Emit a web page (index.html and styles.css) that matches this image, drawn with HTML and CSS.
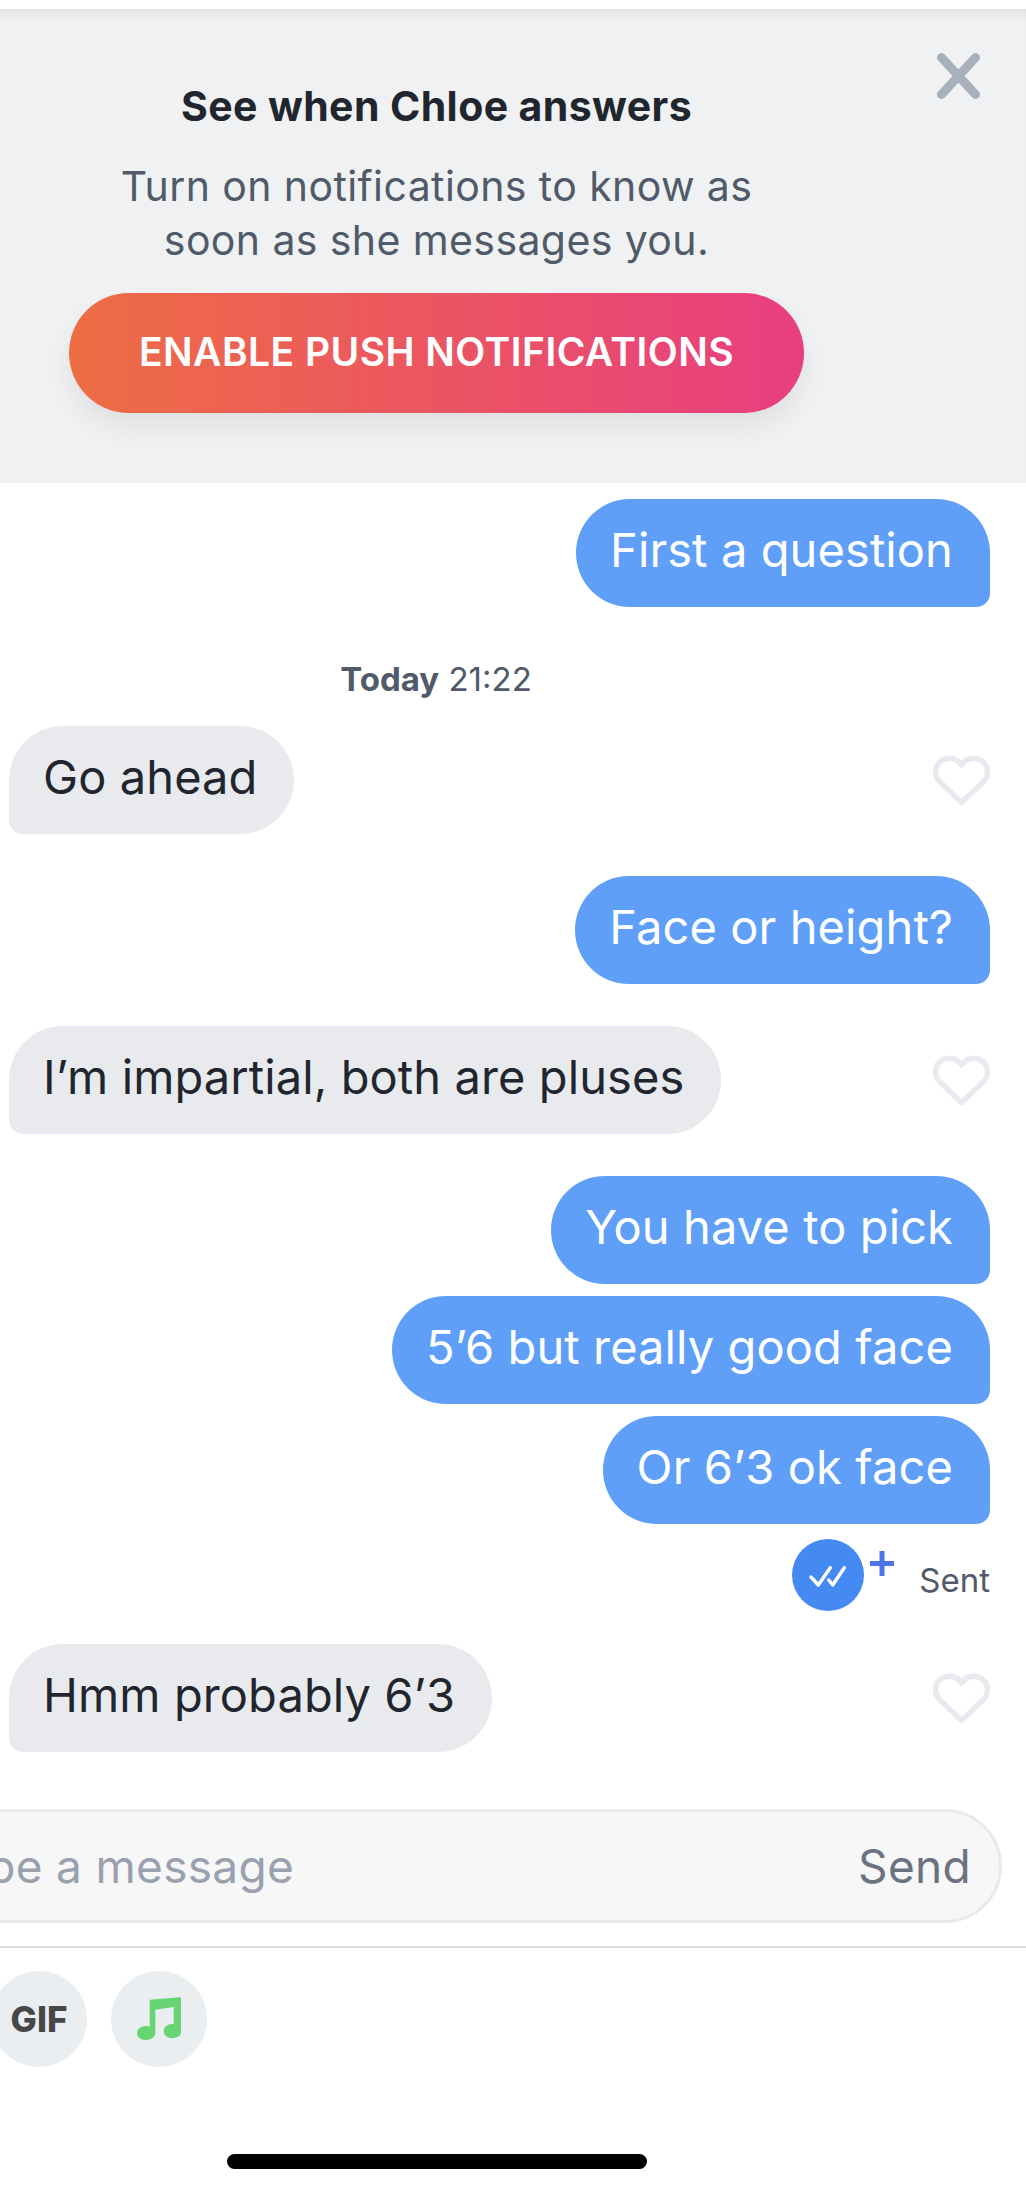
FILE: index.html
```html
<!DOCTYPE html>
<html lang="en">
<head>
    <meta charset="UTF-8">
    <meta name="viewport" content="width=device-width, initial-scale=1.0">
    <title>Chat with Chloe</title>
    <link rel="stylesheet" href="styles.css">
</head>
<body>
    <div class="banner">
        <button class="banner-close" aria-label="Close">
            <svg width="43" height="46" viewBox="0 0 43 46"><path d="M4.5 4.5 L38.5 41.5 M38.5 4.5 L4.5 41.5"/></svg>
        </button>
        <div class="banner-inner">
            <h2 class="banner-title">See when Chloe answers</h2>
            <p class="banner-text">Turn on notifications to know as<br>soon as she messages you.</p>
            <button class="enable-button">ENABLE PUSH NOTIFICATIONS</button>
        </div>
    </div>

    <div class="messages">
        <div class="row row-out first-row"><div class="bubble out">First a question</div></div>
        <div class="timestamp"><b>Today</b> 21:22</div>

        <div class="row row-in">
            <div class="bubble in">Go ahead</div>
            <svg class="heart" width="57" height="51" viewBox="0 0 57 51"><path d="M28.5 47.5 L7.5 27.5 C0 20.5 1.5 9.5 9.5 5 C17 1 24.5 4 28.5 10 C32.5 4 40 1 47.5 5 C55.5 9.5 57 20.5 49.5 27.5 Z"/></svg>
        </div>
        <div class="row row-out gap-big"><div class="bubble out">Face or height?</div></div>
        <div class="row row-in gap-big">
            <div class="bubble in">I’m impartial, both are pluses</div>
            <svg class="heart" width="57" height="51" viewBox="0 0 57 51"><path d="M28.5 47.5 L7.5 27.5 C0 20.5 1.5 9.5 9.5 5 C17 1 24.5 4 28.5 10 C32.5 4 40 1 47.5 5 C55.5 9.5 57 20.5 49.5 27.5 Z"/></svg>
        </div>
        <div class="row row-out gap-big"><div class="bubble out">You have to pick</div></div>
        <div class="row row-out gap-small"><div class="bubble out">5’6 but really good face</div></div>
        <div class="row row-out gap-small"><div class="bubble out">Or 6’3 ok face</div></div>

        <div class="receipt">
            <svg class="receipt-check" width="72" height="72" viewBox="0 0 72 72">
                <circle cx="36" cy="36" r="36"/>
                <path d="M19 38 L26.3 46 L38.3 28.7 M36.7 41 L40.7 46 L52.3 28.7"/>
            </svg>
            <svg class="receipt-plus" width="24" height="25" viewBox="0 0 24 25"><path d="M12 0 V25 M0 12.5 H24"/></svg>
            <span class="receipt-label">Sent</span>
        </div>

        <div class="row row-in gap-receipt">
            <div class="bubble in">Hmm probably 6’3</div>
            <svg class="heart" width="57" height="51" viewBox="0 0 57 51"><path d="M28.5 47.5 L7.5 27.5 C0 20.5 1.5 9.5 9.5 5 C17 1 24.5 4 28.5 10 C32.5 4 40 1 47.5 5 C55.5 9.5 57 20.5 49.5 27.5 Z"/></svg>
        </div>
    </div>

    <div class="composer">
        <div class="composer-input">
            <span class="placeholder">Type a message</span>
            <span class="send">Send</span>
        </div>
    </div>

    <div class="attachments">
        <div class="circle-button gif">GIF</div>
        <div class="circle-button">
            <svg width="44" height="44" viewBox="0 0 44 44"><path d="M12.7 2.7 L43 .2 Q44 .2 44 1.5 V35 C44 39 40 41 35 41 C30 41 26.7 38 26.7 34 C26.7 30 30.5 27 35 27 C35.5 27 36.7 27 36.7 27.5 V10 L18.3 12.7 V36 C18.3 40 14 43 8.5 43 C3.5 43 0 40 0 36 C0 32 4 29 8.5 29 C10 29 12.7 29.5 12.7 30 Z"/></svg>
        </div>
    </div>

    <div class="home-bar"></div>
</body>
</html>
```

FILE: styles.css
```css
:root {
    --text: #21262e;
    --muted: #515a68;
    --blue: #5f9ff8;
    --grey: #e9eaee;
}

html, body {
    margin: 0;
    padding: 0;
}

body {
    width: 1026px;
    height: 2193px;
    overflow: hidden;
    background: white;
    font-family: 'Inter', 'Liberation Sans', sans-serif;
    color: var(--text);
    padding-top: 9px;
    box-sizing: border-box;
}

button {
    font-family: inherit;
    border: none;
    padding: 0;
    background: none;
}

.banner {
    position: relative;
    height: 474px;
    background: #eff1f3;
    box-shadow: inset 0 12px 12px -8px rgba(0,0,0,0.08);
    box-sizing: border-box;
    padding: 72px 0 0 69px;
}

.banner-close {
    position: absolute;
    top: 44px;
    left: 937px;
    line-height: 0;
}

.banner-close path {
    fill: none;
    stroke: #a9b0bd;
    stroke-width: 9;
    stroke-linecap: round;
}

.banner-inner {
    width: 735px;
    text-align: center;
}

.banner-title {
    margin: 0;
    font-size: 41px;
    line-height: 50px;
    font-weight: 700;
    letter-spacing: 0.4px;
}

.banner-text {
    margin: 28px 0 0;
    font-size: 41px;
    line-height: 54px;
    letter-spacing: 0.4px;
    color: var(--muted);
}

.enable-button {
    display: block;
    width: 735px;
    height: 120px;
    margin-top: 26px;
    padding-bottom: 4px;
    border-radius: 60px;
    background: linear-gradient(90deg, #ee6d44, #e83e80);
    box-shadow: 0 14px 26px rgba(0,0,0,0.07);
    color: white;
    font-size: 39px;
    font-weight: 600;
    letter-spacing: 0.45px;
}

.messages {
    padding: 0 36px 0 9px;
}

.row {
    display: flex;
    align-items: center;
    justify-content: space-between;
}

.row-out {
    justify-content: flex-end;
}

.first-row {
    margin-top: 16px;
}

.gap-big {
    margin-top: 42px;
}

.gap-small {
    margin-top: 12px;
}

.gap-receipt {
    margin-top: 33px;
}

.bubble {
    height: 108px;
    box-sizing: border-box;
    padding: 0 37px 0 34px;
    border-radius: 54px;
    font-size: 47px;
    line-height: 102px;
    letter-spacing: 0.1px;
    white-space: nowrap;
}

.bubble.out {
    background: var(--blue);
    color: white;
    border-bottom-right-radius: 14px;
}

.bubble.in {
    background: var(--grey);
    border-bottom-left-radius: 14px;
}

.heart {
    flex: none;
}

.heart path {
    fill: none;
    stroke: #e8eaf0;
    stroke-width: 5.5;
    stroke-linejoin: round;
}

.timestamp {
    margin-top: 52px;
    margin-bottom: 27px;
    padding-right: 127px;
    height: 40px;
    line-height: 40px;
    text-align: center;
    font-size: 33px;
    color: var(--muted);
}

.receipt {
    display: flex;
    align-items: flex-start;
    justify-content: flex-end;
    margin-top: 15px;
}

.receipt-check circle {
    fill: #4589f3;
}

.receipt-check path {
    fill: none;
    stroke: white;
    stroke-width: 3.4;
    stroke-linecap: round;
    stroke-linejoin: round;
}

.receipt-plus {
    margin: 12px 0 0 6px;
}

.receipt-plus path {
    fill: none;
    stroke: #4c72e8;
    stroke-width: 5;
}

.receipt-label {
    margin: 21px 0 0 25px;
    font-size: 33px;
    line-height: 40px;
    color: var(--muted);
}

.composer {
    margin-top: 57px;
    padding-bottom: 23px;
    border-bottom: 2px solid #dcdcdc;
}

.composer-input {
    display: flex;
    align-items: center;
    justify-content: space-between;
    width: 1102px;
    height: 114px;
    margin-left: -100px;
    box-sizing: border-box;
    padding: 0 28px 0 100px;
    background: #f7f7f8;
    border: 3px solid #e9e9ee;
    border-radius: 57px;
    font-size: 46px;
    letter-spacing: 0.3px;
}

.placeholder {
    margin-left: -69px;
    color: #9aa1ae;
}

.send {
    color: #6b7280;
}

.attachments {
    display: flex;
    gap: 24px;
    margin: 23px 0 0 -9px;
}

.circle-button {
    display: flex;
    align-items: center;
    justify-content: center;
    width: 96px;
    height: 96px;
    border-radius: 50%;
    background: #ebeef1;
}

.circle-button svg {
    fill: #68d573;
}

.gif {
    font-size: 35px;
    font-weight: 800;
    color: #474747;
}

.home-bar {
    width: 420px;
    height: 15px;
    margin: 87px 0 0 227px;
    border-radius: 8px;
    background: black;
}
```
